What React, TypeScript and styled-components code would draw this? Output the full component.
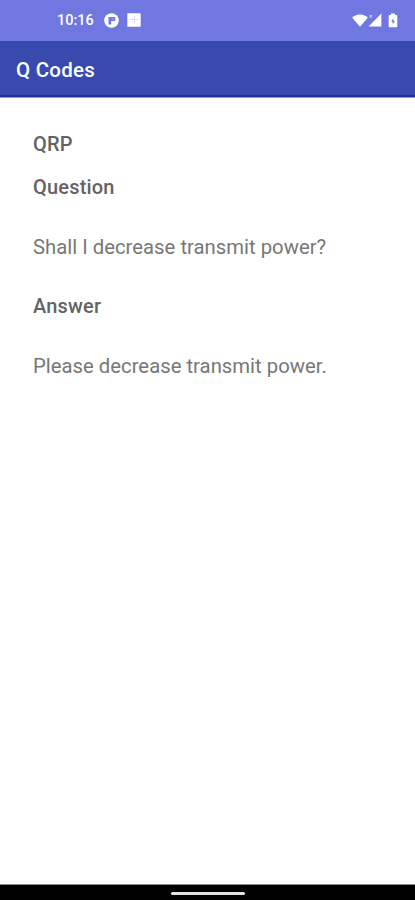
import React from 'react';
import styled, { createGlobalStyle } from 'styled-components';

const GlobalStyle = createGlobalStyle`
  * { box-sizing: border-box; }
  body { margin: 0; background: #fff; font-family: Roboto, sans-serif; }
`;

const Screen = styled.div`
  display: flex;
  flex-direction: column;
  height: 900px;
  width: 100%;
  overflow: hidden;
  background: #fff;
`;

const StatusBar = styled.header`
  display: flex;
  align-items: center;
  height: 41px;
  flex: none;
  padding: 0 17px 1px 57px;
  background: #7077e0;
  color: #fff;
`;

const Clock = styled.span`
  width: 47px;
  padding-top: 2px;
  font-size: 14.5px;
  font-weight: 500;
  line-height: 20px;
`;

const Notifications = styled.div`
  display: flex;
  align-items: center;
  gap: 8px;
`;

const SystemIcons = styled.div`
  display: flex;
  align-items: center;
  margin-left: auto;
`;

const BatterySlot = styled.span`
  display: flex;
  margin-left: 6px;
`;

const AppBar = styled.div`
  display: flex;
  align-items: center;
  height: 57px;
  flex: none;
  padding: 0 16px;
  background: #394aae;
  border-bottom: 1px solid #8795dd;
  box-shadow: inset 0 -2px 0 #1f329b;
`;

const Title = styled.h1`
  margin: 0;
  padding-top: 1px;
  color: #fff;
  font-size: 20.5px;
  font-weight: 500;
  line-height: 28px;
  letter-spacing: 0.25px;
`;

const Content = styled.main`
  flex: 1;
  padding: 32px 33px;
`;

const Heading = styled.h2<{ $top?: number }>`
  margin: ${({ $top = 0 }) => $top}px 0 0;
  color: #636363;
  font-size: 20px;
  font-weight: 500;
  line-height: 28px;
  letter-spacing: 0.18px;
`;

const Text = styled.p`
  margin: 32px 0 0;
  color: #777;
  font-size: 20.3px;
  font-weight: 400;
  line-height: 29px;
  letter-spacing: 0.01px;
  white-space: nowrap;
`;

const NavigationBar = styled.footer`
  display: flex;
  justify-content: center;
  align-items: center;
  flex: none;
  height: 16px;
  padding-top: 1px;
  background: #000;
  border-top: 1px solid #8c8c8c;
`;

const HomeHandle = styled.div`
  width: 74px;
  height: 3px;
  border-radius: 1.5px;
  background: #e3e3e3;
`;

const AppNoticeIcon = () => (
  <svg width="15" height="15" viewBox="0 0 15 15">
    <circle cx="7.5" cy="7.5" r="7.3" fill="#fff" />
    <path d="M4.5 4h6.8v4H7.2v3.6H4.5z" fill="#7077e0" />
    <path d="M7.6 5.4h2.2v1.2H7.6z" fill="#a9adec" />
  </svg>
);

const TilesIcon = () => (
  <svg width="14" height="14" viewBox="0 0 14 14">
    <rect x=".3" y=".3" width="13.4" height="13.4" rx=".5" fill="#fff" />
    <path d="M7.5 3v7M3 6.5h8" stroke="#cfd1f6" strokeWidth=".8" />
  </svg>
);

const WifiIcon = () => (
  <svg width="16" height="13" viewBox="0 0 16 13">
    <path d="M.2 3.7C4.7-.6 11.3-.6 15.8 3.7L8 12.8z" fill="#fff" />
  </svg>
);

const SignalIcon = () => (
  <svg width="14" height="14" viewBox="0 0 14 14">
    <path d="M13.4.5v13H.6z" fill="#fff" />
    <path d="M1.7 2.4l2 2M3.7 2.4l-2 2" stroke="#e6e7fb" strokeWidth="1.2" />
  </svg>
);

const BatteryIcon = () => (
  <svg width="10" height="15" viewBox="0 0 10 15">
    <path d="M3 .5h4v1.6h1.3q1 0 1 1v10.2q0 1-1 1H1.7q-1 0-1-1V3.1q0-1 1-1H3z" fill="#fff" />
    <path d="M5.4 4.9L3.2 8.7h1.5v2.8L7 7.7H5.4z" fill="#7077e0" />
  </svg>
);

export default function App() {
  return (
    <>
      <GlobalStyle />
      <Screen>
        <StatusBar>
          <Clock>10:16</Clock>
          <Notifications>
            <AppNoticeIcon />
            <TilesIcon />
          </Notifications>
          <SystemIcons>
            <WifiIcon />
            <SignalIcon />
            <BatterySlot>
              <BatteryIcon />
            </BatterySlot>
          </SystemIcons>
        </StatusBar>
        <AppBar>
          <Title>Q Codes</Title>
        </AppBar>
        <Content>
          <Heading>QRP</Heading>
          <Heading $top={15}>Question</Heading>
          <Text>Shall I decrease transmit power?</Text>
          <Heading $top={30}>Answer</Heading>
          <Text>Please decrease transmit power.</Text>
        </Content>
        <NavigationBar>
          <HomeHandle />
        </NavigationBar>
      </Screen>
    </>
  );
}
